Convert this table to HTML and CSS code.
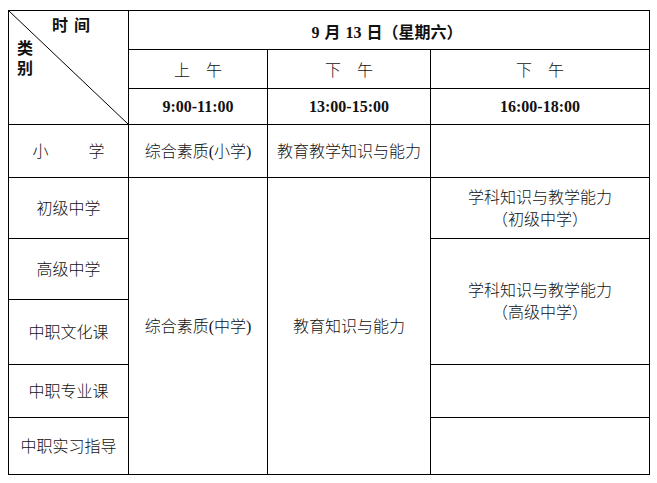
FILE: index.html
```html
<!DOCTYPE html>
<html lang="zh-CN">
<head>
<meta charset="utf-8">
<title>考试时间安排</title>
<link rel="stylesheet" href="styles.css">
</head>
<body>
<table class="schedule">
  <colgroup>
    <col class="c1"><col class="c2"><col class="c3"><col class="c4">
  </colgroup>
  <tr class="h1">
    <th class="corner" rowspan="3">
      <svg class="diag" viewBox="0 0 100 100" preserveAspectRatio="none" aria-hidden="true">
        <line x1="0" y1="0" x2="100" y2="100" vector-effect="non-scaling-stroke"/>
      </svg>
      <div class="corner-time">时<span class="sgap"></span>间</div>
      <div class="corner-cat">类<br>别</div>
    </th>
    <th class="date" colspan="3">9 月 13 日<span class="fw">（</span>星期六<span class="fw">）</span></th>
  </tr>
  <tr class="h2">
    <td class="period">上　午</td>
    <td class="period">下　午</td>
    <td class="period">下　午</td>
  </tr>
  <tr class="h3">
    <th class="time">9:00-11:00</th>
    <th class="time">13:00-15:00</th>
    <th class="time">16:00-18:00</th>
  </tr>
  <tr class="r1">
    <td><span class="spread">小<span class="gap"></span>学</span></td>
    <td>综合素质(小学)</td>
    <td>教育教学知识与能力</td>
    <td></td>
  </tr>
  <tr class="r2">
    <td>初级中学</td>
    <td rowspan="6">综合素质(中学)</td>
    <td rowspan="6">教育知识与能力</td>
    <td>学科知识与教学能力<br><span class="fw">（</span>初级中学<span class="fw">）</span></td>
  </tr>
  <tr class="r3">
    <td>高级中学</td>
    <td rowspan="2">学科知识与教学能力<br><span class="fw">（</span>高级中学<span class="fw">）</span></td>
  </tr>
  <tr class="r4">
    <td>中职文化课</td>
  </tr>
  <tr class="r5">
    <td>中职专业课</td>
    <td></td>
  </tr>
  <tr class="r6">
    <td>中职实习指导</td>
    <td></td>
  </tr>
</table>
</body>
</html>
```

FILE: styles.css
```css
html, body {
  margin: 0;
  padding: 0;
  background: #fff;
}

body {
  padding: 10px 0 0 8px;
  font-family: "Liberation Serif", "Noto Sans CJK SC", serif;
  color: #111;
}

.schedule {
  border-collapse: collapse;
  table-layout: fixed;
  width: 641px;
  font-size: 16px;
  line-height: 21px;
}

.c1 { width: 120px; }
.c2 { width: 139px; }
.c3 { width: 163px; }
.c4 { width: 219px; }

.schedule th,
.schedule td {
  border: 1px solid #000;
  padding: 0;
  text-align: center;
  vertical-align: middle;
  font-weight: 300;
}

.h1 { height: 39px; }
.h2 { height: 39px; }
.h3 { height: 36px; }
.r1 { height: 53px; }
.r2 { height: 61px; }
.r3 { height: 61px; }
.r4 { height: 65px; }
.r5 { height: 53px; }
.r6 { height: 57px; }

.fw {
  display: inline-block;
  width: 1em;
  text-align: center;
  font-family: "Noto Sans CJK TC", "Noto Sans CJK SC", sans-serif;
}

.schedule th.corner {
  position: relative;
  vertical-align: top;
  text-align: left;
  font-weight: 700;
  line-height: 20px;
}

.diag {
  position: absolute;
  left: 0;
  top: 0;
  width: 100%;
  height: 100%;
  overflow: visible;
}

.diag line {
  stroke: #000;
  stroke-width: 1;
}

.corner-time {
  padding: 5px 0 0 43px;
}

.sgap {
  display: inline-block;
  width: 6px;
}

.corner-cat {
  padding: 3px 0 0 8px;
}

.schedule th.date {
  font-weight: 700;
  padding-top: 3px;
  padding-right: 4px;
  word-spacing: 1px;
}

.schedule td.period {
  padding-top: 2px;
}

.schedule th.time {
  font-weight: 700;
  font-size: 16px;
}

.spread {
  display: inline-flex;
  align-items: center;
}

.gap {
  display: inline-block;
  width: 40px;
}
```
